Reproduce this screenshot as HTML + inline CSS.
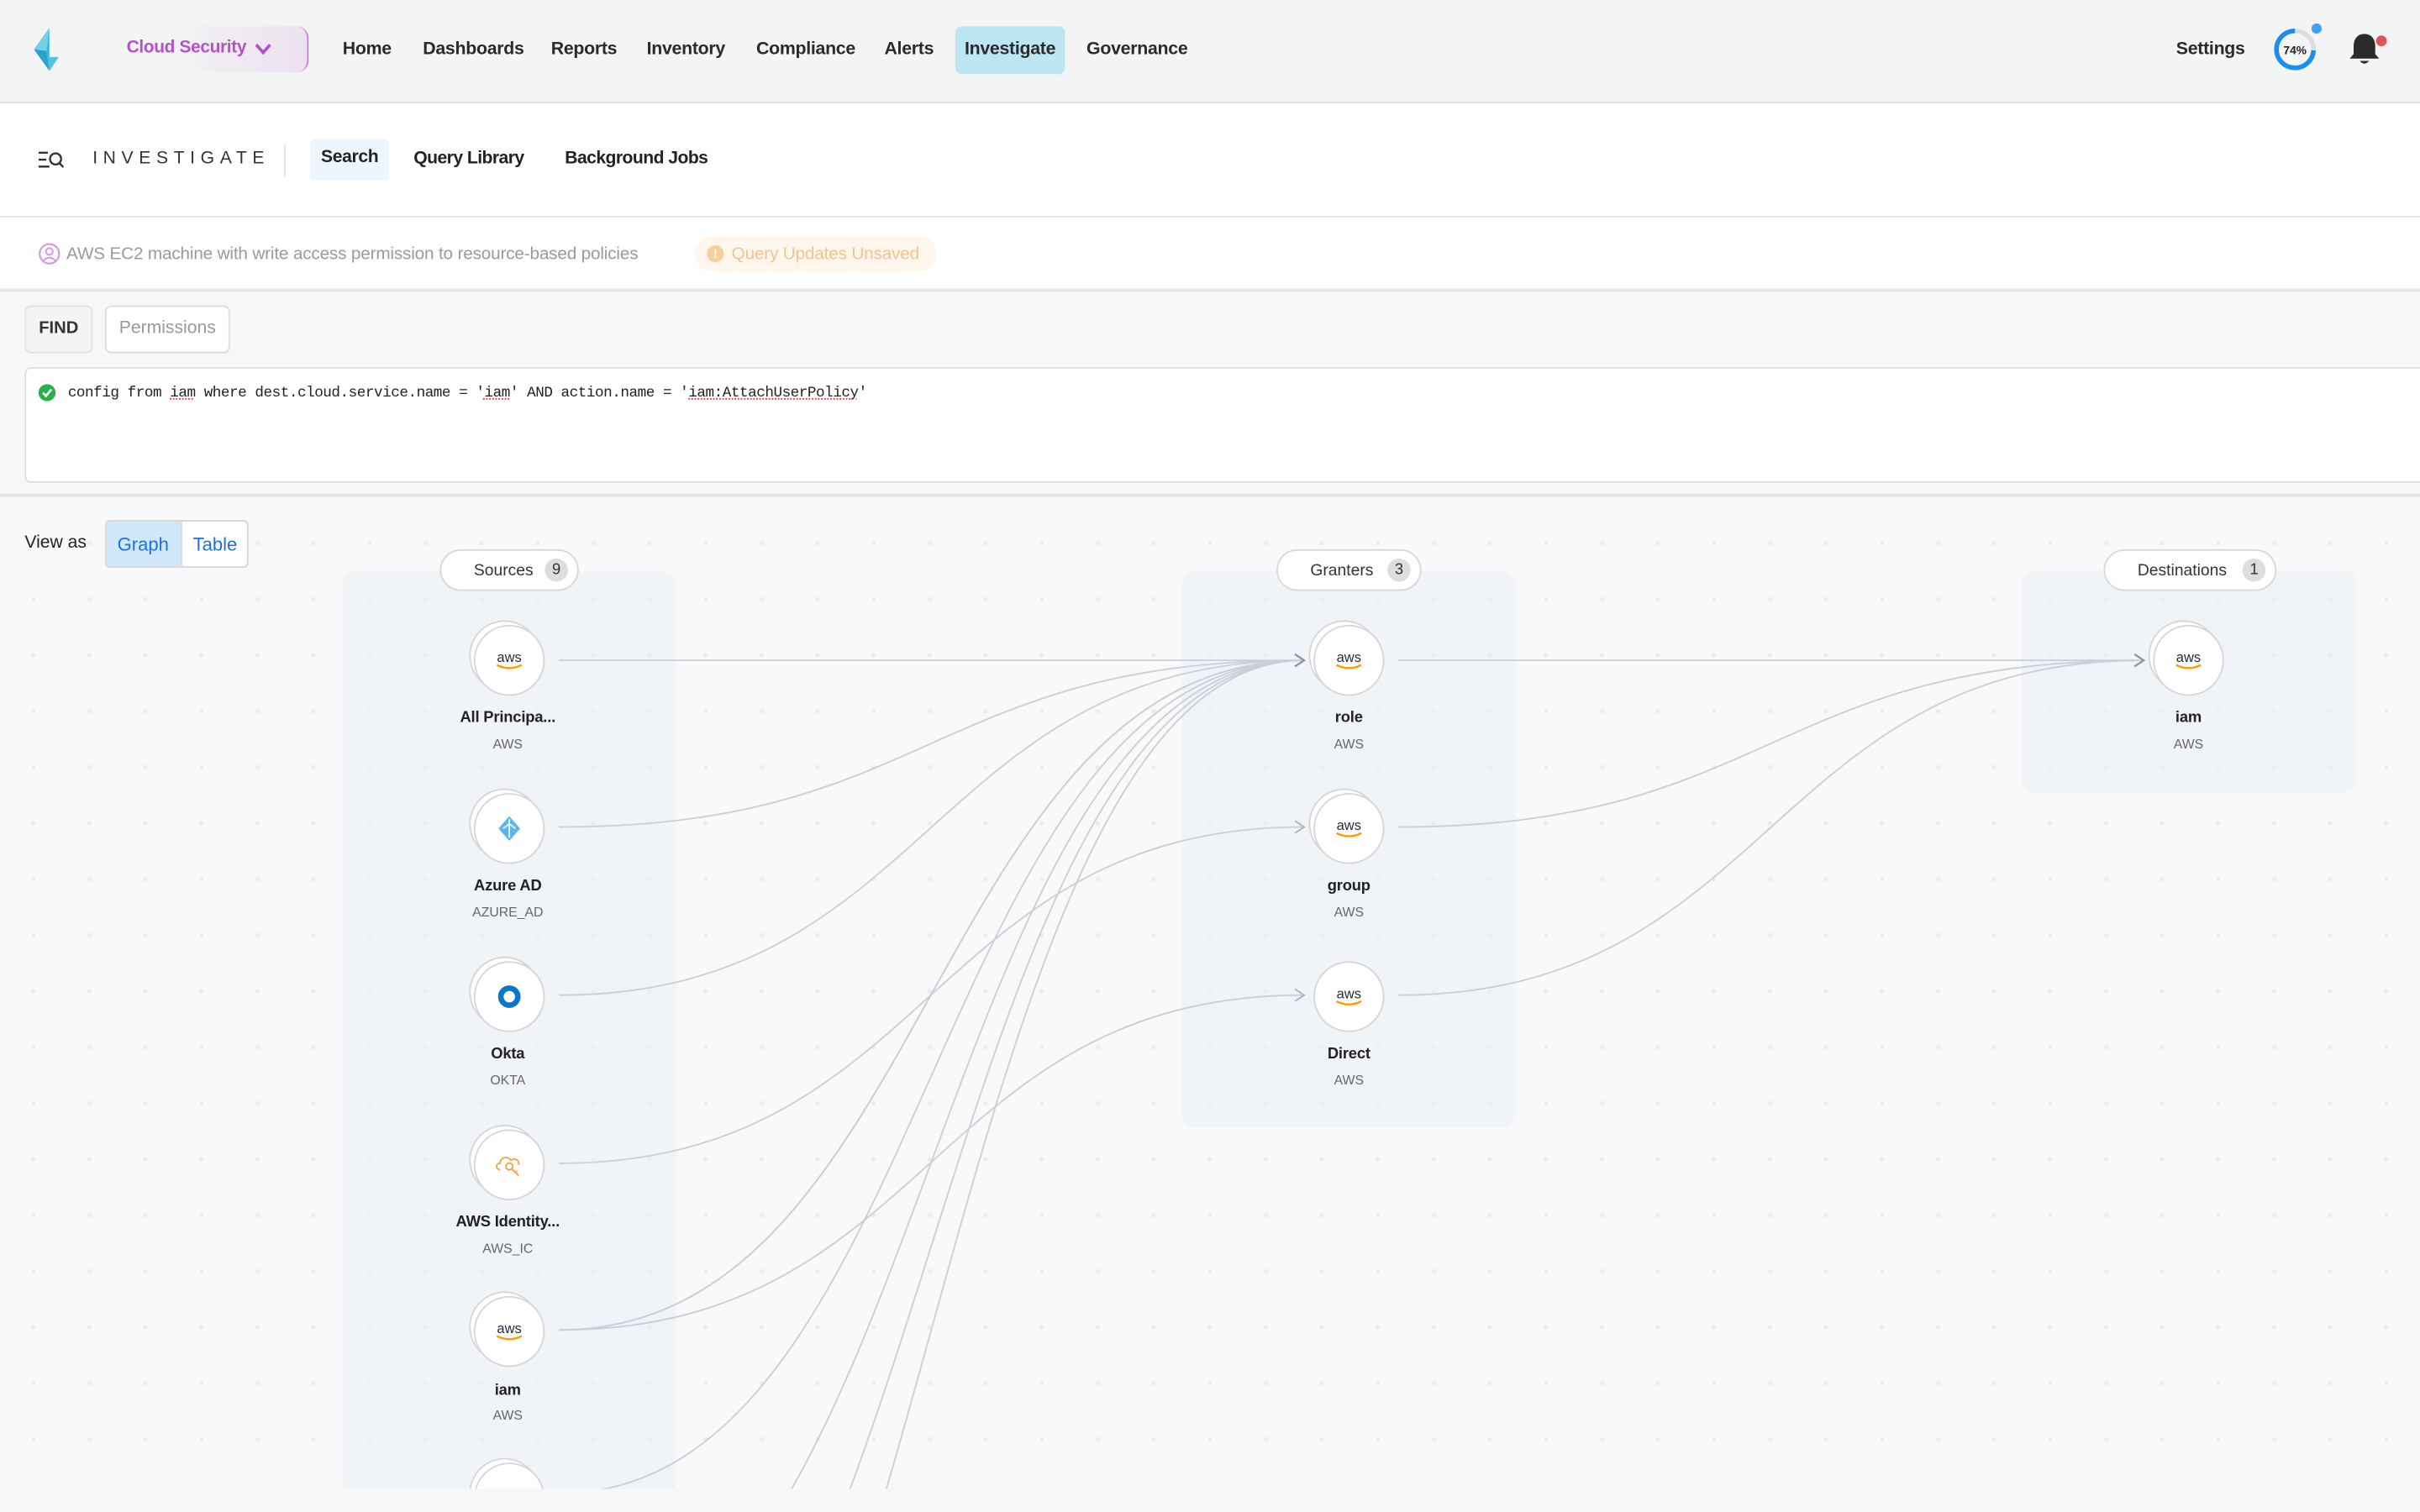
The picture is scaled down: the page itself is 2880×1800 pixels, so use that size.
<!DOCTYPE html>
<html><head><meta charset="utf-8">
<style>
*{box-sizing:border-box;margin:0;padding:0}
html,body{width:2880px;height:1800px;overflow:hidden;background:#f7f7f7}
#w{position:absolute;left:0;top:0;width:1568px;height:980px;overflow:hidden;transform:scale(1.836735);transform-origin:0 0;font-family:"Liberation Sans",sans-serif;color:#222;background:#f7f7f7}
.a{position:absolute}
.nav{top:0;left:0;width:1568px;height:67px;background:#f3f4f4;border-bottom:1px solid #dcdcdc}
.ni{position:absolute;top:25px;font-size:11.6px;font-weight:bold;color:#2a2a2a;letter-spacing:-.15px}
.bar2{top:67px;left:0;width:1568px;height:74px;background:#fff;border-bottom:1px solid #e6e6e6}
.bar3{top:141px;left:0;width:1568px;height:48px;background:#fff;border-bottom:2px solid #e3e3e3}
.graph{top:321px;left:0;width:1568px;height:644px;background-color:#f9f9fa;overflow:hidden;
background-image:radial-gradient(circle,#eaebee 1.3px,transparent 1.6px);background-size:36.3px 36.3px;background-position:3.5px 12px}
.panel{position:absolute;background:rgba(234,238,245,.6);border-radius:8px}
.hdr{position:absolute;height:27px;background:#fff;border:1px solid #d8d8d8;border-radius:14px;font-size:10.5px;color:#333}
.hdr span.c{position:absolute;right:6px;top:5px;width:15px;height:15px;border-radius:50%;background:#ddd;font-size:10px;text-align:center;line-height:15px;color:#333}
.node{position:absolute;width:46px;height:46px}
.node .b{position:absolute;left:-3px;top:-3px;width:46px;height:46px;border-radius:50%;background:#fff;border:1px solid #d6d6d6}
.node .f{position:absolute;left:0;top:0;width:46px;height:46px;border-radius:50%;background:#fff;border:1px solid #d6d6d6;display:flex;align-items:center;justify-content:center}
.lb{position:absolute;width:120px;text-align:center;font-size:10px;font-weight:bold;color:#222;letter-spacing:-.1px}
.sb{position:absolute;width:120px;text-align:center;font-size:8.6px;color:#666}
</style></head><body><div id="w">

<div class="a nav">
  <svg class="a" style="left:20px;top:17px" width="24" height="30" viewBox="0 0 24 30"><path d="M12 1 L2 15 L10 16 Z" fill="#6fd0ea"/><path d="M12 1 L10 16 L12 29 Z" fill="#3bb6dd"/><path d="M12 1 L12 29 L18 20 L12 20 Z" fill="#53c3e4"/><path d="M2 15 L12 29 L10 16Z" fill="#2aa0cc"/></svg>
  <div class="a" style="left:70px;top:17px;width:130px;height:30px;border-radius:8px;background:linear-gradient(90deg,#f3f4f4 30%,#ece1f0);border-right:1.5px solid #c27bd2"></div>
  <div class="a" style="left:82px;top:25px;font-size:11.4px;font-weight:bold;color:#b451c9;letter-spacing:-.2px">Cloud Security</div>
  <svg class="a" style="left:165px;top:28px" width="11" height="8" viewBox="0 0 11 8"><path d="M1 1 L5.5 6 L10 1" stroke="#b451c9" stroke-width="2" fill="none"/></svg>
  <div class="ni" style="left:222px">Home</div>
  <div class="ni" style="left:274px">Dashboards</div>
  <div class="ni" style="left:357px">Reports</div>
  <div class="ni" style="left:419px">Inventory</div>
  <div class="ni" style="left:490px">Compliance</div>
  <div class="ni" style="left:573px">Alerts</div>
  <div class="a" style="left:619px;top:17px;width:71px;height:31px;background:#bde6f3;border-radius:4px"></div>
  <div class="ni" style="left:625px">Investigate</div>
  <div class="ni" style="left:704px">Governance</div>
  <div class="ni" style="left:1410px">Settings</div>
  <svg class="a" style="left:1471px;top:14px" width="36" height="36" viewBox="0 0 36 36"><circle cx="16" cy="18" r="12" fill="none" stroke="#ddd" stroke-width="3"/><circle cx="16" cy="18" r="12" fill="none" stroke="#1b8ff0" stroke-width="3" stroke-dasharray="55.8 75.4" transform="rotate(-90 16 18) scale(1,-1) translate(0,-36)"/><text x="16" y="21" font-size="7.5" font-weight="bold" text-anchor="middle" font-family="Liberation Sans" fill="#222">74%</text><circle cx="30" cy="4.5" r="3.3" fill="#3ea1f2"/></svg>
  <svg class="a" style="left:1521px;top:20px" width="30" height="24" viewBox="0 0 30 24"><path d="M11 2 C6 2 4 6 4 10 L4 15 L1.5 18 L20.5 18 L18 15 L18 10 C18 6 16 2 11 2Z" fill="#2b2b2b"/><path d="M8 19.5 Q11 23 14 19.5Z" fill="#2b2b2b"/><circle cx="22" cy="6.5" r="3.5" fill="#e05456"/></svg>
</div>

<div class="a bar2">
  <svg class="a" style="left:24px;top:31px" width="18" height="12" viewBox="0 0 18 12"><path d="M1 1h6M1 5.5h5M1 10h7" stroke="#333" stroke-width="1.3"/><circle cx="12" cy="5" r="3.6" fill="none" stroke="#333" stroke-width="1.3"/><path d="M14.5 7.6l2.5 2.8" stroke="#333" stroke-width="1.3"/></svg>
  <div class="a" style="left:60px;top:30px;font-size:11.5px;letter-spacing:3.6px;color:#333">INVESTIGATE</div>
  <div class="a" style="left:184px;top:27px;width:1px;height:20px;background:#ddd"></div>
  <div class="a" style="left:201px;top:23px;width:51px;height:27px;background:#eef6fd;border-radius:3px"></div>
  <div class="a" style="left:208px;top:29px;font-size:11.5px;font-weight:bold;color:#222;letter-spacing:-.2px">Search</div>
  <div class="a" style="left:268px;top:30px;font-size:11.5px;font-weight:bold;color:#222;letter-spacing:-.3px">Query Library</div>
  <div class="a" style="left:366px;top:30px;font-size:11.5px;font-weight:bold;color:#222;letter-spacing:-.3px">Background Jobs</div>
</div>

<div class="a bar3">
  <svg class="a" style="left:25px;top:16px" width="14" height="15" viewBox="0 0 14 15"><circle cx="7" cy="7.5" r="6.3" fill="none" stroke="#d49be0" stroke-width="1.2"/><circle cx="7" cy="6" r="2.2" fill="none" stroke="#d49be0" stroke-width="1.1"/><path d="M3 12 Q7 8 11 12" fill="none" stroke="#d49be0" stroke-width="1.1"/></svg>
  <div class="a" style="left:43px;top:18px;font-size:11.3px;color:#9a9a9a;letter-spacing:-.1px">AWS EC2 machine with write access permission to resource-based policies</div>
  <div class="a" style="left:450px;top:12px;width:157px;height:23px;background:#fff7ee;border-radius:12px"></div>
  <div class="a" style="left:458px;top:18px;width:11px;height:11px;border-radius:50%;background:#f8cf9f;color:#fff;font-size:8px;text-align:center;line-height:11px;font-weight:bold">!</div>
  <div class="a" style="left:474px;top:18px;font-size:11.3px;color:#f4c38d;letter-spacing:-.1px">Query Updates Unsaved</div>
</div>

<div class="a" style="left:16px;top:198px;width:44px;height:31px;background:#f3f4f4;border:1px solid #e2e2e2;border-radius:4px;font-size:11px;font-weight:bold;color:#333;text-align:center;line-height:29px">FIND</div>
<div class="a" style="left:68px;top:198px;width:81px;height:31px;background:#fff;border:1px solid #dcdcdc;border-radius:4px;font-size:11.5px;color:#9a9a9a;text-align:center;line-height:29px">Permissions</div>
<div class="a" style="left:16px;top:238px;width:1560px;height:75px;background:#fff;border:1px solid #ddd;border-radius:4px"></div>
<svg class="a" style="left:25px;top:249px" width="11" height="11" viewBox="0 0 11 11"><circle cx="5.5" cy="5.5" r="5.5" fill="#27b04a"/><path d="M2.8 5.6 L4.8 7.6 L8.3 3.4" stroke="#fff" stroke-width="1.5" fill="none"/></svg>
<div class="a" style="left:44px;top:249px;font-family:'Liberation Mono',monospace;font-size:9.6px;letter-spacing:-.25px;color:#222;white-space:pre">config from <u style="text-decoration:underline dotted #e33">iam</u> where dest.cloud.service.name = '<u style="text-decoration:underline dotted #e33">iam</u>' AND action.name = '<u style="text-decoration:underline dotted #e33">iam:AttachUserPolicy</u>'</div>
<div class="a" style="left:0;top:320px;width:1568px;height:2px;background:#e3e3e3"></div>

<div class="a graph" style="top:322px;height:643px">
  <div class="a" style="left:16px;top:24px;font-size:11.5px;color:#222">View as</div>
  <div class="a" style="left:68px;top:15px;width:93px;height:31px;border:1px solid #d6d6d6;border-radius:3px;background:#fff;overflow:hidden">
    <div class="a" style="left:0;top:0;width:49px;height:31px;background:#cfe6fb;border-right:1px solid #d6d6d6"></div>
    <div class="a" style="left:7px;top:8px;font-size:12px;color:#1d72d6">Graph</div>
    <div class="a" style="left:56px;top:8px;font-size:12px;color:#1d72d6">Table</div>
  </div>

  <div class="panel" style="left:222px;top:48px;width:216px;height:600px"></div>
  <div class="panel" style="left:766px;top:48px;width:216px;height:361px"></div>
  <div class="panel" style="left:1310px;top:48px;width:217px;height:144px"></div>

  <svg class="a" style="left:0;top:0" width="1568" height="643" viewBox="0 322 1568 643" fill="none" stroke="#c9cfd8" stroke-width="1">
    <path d="M362 428 H845"/>
    <path d="M362 536 C603 536 603 428 845 428"/>
    <path d="M362 645 C603 645 603 428 845 428"/>
    <path d="M362 754 C603 754 603 536 845 536"/>
    <path d="M362 862 C603 862 603 428 845 428"/>
    <path d="M362 862 C603 862 603 428 845 428" transform="translate(0,0)"/>
    <path d="M362 862 C603 862 603 645 845 645"/>
    <path d="M362 968 C603 968 603 428 845 428"/>
    <path d="M362 1080 C603 1080 603 428 845 428"/>
    <path d="M362 1189 C603 1189 603 428 845 428"/>
    <path d="M362 1298 C603 1298 603 428 845 428"/>
    <path d="M906 428 H1389"/>
    <path d="M906 536 C1147 536 1147 428 1389 428"/>
    <path d="M906 645 C1147 645 1147 428 1389 428"/>
    <g stroke="#8593a6" stroke-width="1.2"><path d="M839 424 L845 428 L839 432"/><path d="M1383 424 L1389 428 L1383 432"/></g>
    <g stroke="#a8b2c0"><path d="M839 532 L845 536 L839 540"/><path d="M839 641 L845 645 L839 649"/></g>
  </svg>

  <div class="hdr" style="left:285px;top:34px;width:90px"><span class="a" style="left:21px;top:7px">Sources</span><span class="c">9</span></div>
  <div class="hdr" style="left:827px;top:34px;width:94px"><span class="a" style="left:21px;top:7px">Granters</span><span class="c">3</span></div>
  <div class="hdr" style="left:1363px;top:34px;width:112px"><span class="a" style="left:21px;top:7px">Destinations</span><span class="c">1</span></div>

  <div class="node" style="left:307px;top:83px"><div class="b"></div><div class="f"><svg width="22" height="14" viewBox="0 0 22 14"><text x="11" y="8" font-size="9" text-anchor="middle" font-family="Liberation Sans" fill="#232f3e">aws</text><path d="M3 10 Q11 14 19 10" stroke="#f90" stroke-width="1.3" fill="none"/></svg></div></div>
  <div class="lb" style="left:269px;top:138px">All Principa...</div><div class="sb" style="left:269px;top:155px">AWS</div>

  <div class="node" style="left:307px;top:192px"><div class="b"></div><div class="f"><svg width="16" height="18" viewBox="0 0 16 18"><path d="M8 1 L15 9 L8 17 L1 9Z" fill="#5bb8e4"/><path d="M8 3 V15 M4 9 L8 6 L12 9" stroke="#e7f5fc" stroke-width="1" fill="none"/></svg></div></div>
  <div class="lb" style="left:269px;top:247px">Azure AD</div><div class="sb" style="left:269px;top:264px">AZURE_AD</div>

  <div class="node" style="left:307px;top:301px"><div class="b"></div><div class="f"><svg width="16" height="16"><circle cx="8" cy="8" r="5.5" fill="none" stroke="#0b77c6" stroke-width="3.6"/></svg></div></div>
  <div class="lb" style="left:269px;top:356px">Okta</div><div class="sb" style="left:269px;top:373px">OKTA</div>

  <div class="node" style="left:307px;top:410px"><div class="b"></div><div class="f"><svg width="20" height="16" viewBox="0 0 20 16" fill="none" stroke="#f2a044" stroke-width="1"><path d="M4 11 C1 11 1 7 4 7 C4 3 9 2 11 5 C13 3 17 5 16 8"/><circle cx="10" cy="9" r="2.2"/><path d="M11.5 10.5 L16 15 M14 13 L15 12"/></svg></div></div>
  <div class="lb" style="left:269px;top:465px">AWS Identity...</div><div class="sb" style="left:269px;top:482px">AWS_IC</div>

  <div class="node" style="left:307px;top:518px"><div class="b"></div><div class="f"><svg width="22" height="14" viewBox="0 0 22 14"><text x="11" y="8" font-size="9" text-anchor="middle" font-family="Liberation Sans" fill="#232f3e">aws</text><path d="M3 10 Q11 14 19 10" stroke="#f90" stroke-width="1.3" fill="none"/></svg></div></div>
  <div class="lb" style="left:269px;top:574px">iam</div><div class="sb" style="left:269px;top:590px">AWS</div>

  <div class="node" style="left:307px;top:626px"><div class="b"></div><div class="f"></div></div>

  <div class="node" style="left:851px;top:83px"><div class="b"></div><div class="f"><svg width="22" height="14" viewBox="0 0 22 14"><text x="11" y="8" font-size="9" text-anchor="middle" font-family="Liberation Sans" fill="#232f3e">aws</text><path d="M3 10 Q11 14 19 10" stroke="#f90" stroke-width="1.3" fill="none"/></svg></div></div>
  <div class="lb" style="left:814px;top:138px">role</div><div class="sb" style="left:814px;top:155px">AWS</div>

  <div class="node" style="left:851px;top:192px"><div class="b"></div><div class="f"><svg width="22" height="14" viewBox="0 0 22 14"><text x="11" y="8" font-size="9" text-anchor="middle" font-family="Liberation Sans" fill="#232f3e">aws</text><path d="M3 10 Q11 14 19 10" stroke="#f90" stroke-width="1.3" fill="none"/></svg></div></div>
  <div class="lb" style="left:814px;top:247px">group</div><div class="sb" style="left:814px;top:264px">AWS</div>

  <div class="node" style="left:851px;top:301px"><div class="f"><svg width="22" height="14" viewBox="0 0 22 14"><text x="11" y="8" font-size="9" text-anchor="middle" font-family="Liberation Sans" fill="#232f3e">aws</text><path d="M3 10 Q11 14 19 10" stroke="#f90" stroke-width="1.3" fill="none"/></svg></div></div>
  <div class="lb" style="left:814px;top:356px">Direct</div><div class="sb" style="left:814px;top:373px">AWS</div>

  <div class="node" style="left:1395px;top:83px"><div class="b"></div><div class="f"><svg width="22" height="14" viewBox="0 0 22 14"><text x="11" y="8" font-size="9" text-anchor="middle" font-family="Liberation Sans" fill="#232f3e">aws</text><path d="M3 10 Q11 14 19 10" stroke="#f90" stroke-width="1.3" fill="none"/></svg></div></div>
  <div class="lb" style="left:1358px;top:138px">iam</div><div class="sb" style="left:1358px;top:155px">AWS</div>
</div>
<div class="a" style="left:0;top:965px;width:1568px;height:15px;background:#f7f7f7"></div>
</div></body></html>
